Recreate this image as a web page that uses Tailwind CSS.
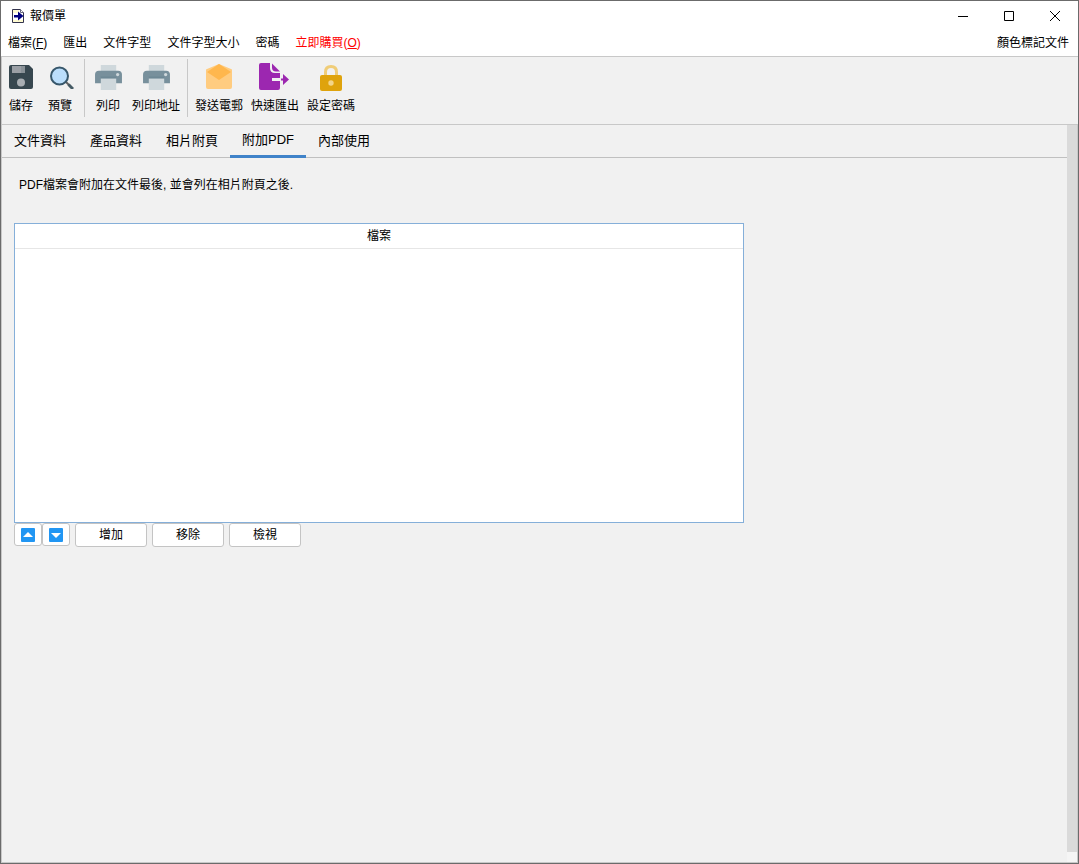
<!DOCTYPE html>
<html lang="zh-Hant">
<head>
<meta charset="utf-8">
<meta name="viewport" content="width=device-width, initial-scale=1">
<title>報價單</title>
<script src="https://cdn.jsdelivr.net/npm/@tailwindcss/browser@4"></script>
</head>
<body class="flex min-h-screen flex-col border border-[#6b6b6b] bg-[#f1f1f1] font-['Liberation_Sans','Noto_Sans_CJK_TC',sans-serif] text-xs text-black">
  <svg class="hidden" aria-hidden="true">
    <symbol id="printer" viewBox="0 0 28 26">
      <path fill="#cfd8dc" d="M6 0h16v7H6z"/>
      <path fill="#78909c" d="M4 6h20q4 0 4 4v9H0v-9q0-4 4-4z"/>
      <path fill="#cfd8dc" d="M6 14h16v12H6z"/>
      <path fill="#607d8b" d="M6 12h16v2H6z" opacity=".4"/>
      <circle cx="23.500" cy="10" r="1.700" fill="#cfd8dc"/>
    </symbol>
  </svg>

  <header class="border-b border-[#c8c8c8] bg-white">
    <div class="flex h-[29px] items-center pl-[9px]">
      <svg class="h-4 w-4" viewBox="0 0 16 16" aria-hidden="true">
        <path fill="#fff" stroke="#33334d" d="M2.500 1.500h8l3 3v10h-11z"/>
        <path fill="#fffbd0" d="M3 2h6v3H3zM3 12h10v2H3z"/>
        <path fill="#fff" stroke="#666680" d="M10.500 1.500v3h3"/>
        <path fill="#000080" d="M4 7h4V3.500l5.500 4.500L8 12.500V9.500H4z"/>
      </svg>
      <h1 class="ml-1 grow">報價單</h1>
      <div class="flex h-full">
        <button aria-label="最小化" class="flex w-[46px] items-center justify-center"><svg class="h-3 w-3" viewBox="0 0 12 12"><path stroke="#000" d="M1 6.500h10"/></svg></button>
        <button aria-label="最大化" class="flex w-[46px] items-center justify-center"><svg class="h-3 w-3" viewBox="0 0 12 12"><path fill="none" stroke="#000" d="M1.500 1.500h9v9h-9z"/></svg></button>
        <button aria-label="關閉" class="flex w-[46px] items-center justify-center"><svg class="h-3 w-3" viewBox="0 0 12 12"><path stroke="#000" d="M1 1l10 10M11 1L1 11"/></svg></button>
      </div>
    </div>
    <nav class="flex h-[26px] items-center gap-4 pr-[9px] pl-[7px]">
      <button>檔案(<u>F</u>)</button>
      <button>匯出</button>
      <button>文件字型</button>
      <button>文件字型大小</button>
      <button>密碼</button>
      <button class="text-[#ff0000]">立即購買(<u>O</u>)</button>
      <button class="ml-auto">顏色標記文件</button>
    </nav>
  </header>

  <div role="toolbar" class="flex h-[68px] border-b border-l border-[#c8c8c8] pt-[2px] pb-[7px]">
    <button class="flex w-[38px] flex-col items-center pt-[6px]">
      <svg class="h-6 w-6" viewBox="0 0 24 24" aria-hidden="true">
        <path fill="#37474f" d="M2 0h18l4 4v18q0 2-2 2H2q-2 0-2-2V2q0-2 2-2z"/>
        <path fill="#9a9fa5" d="M3 1h13v7H3z"/><path fill="#78848a" d="M12 1h4v7h-4z" opacity=".5"/>
        <circle cx="12" cy="17.500" r="4" fill="#a9aeb3"/>
      </svg>
      <span class="mt-[7px] leading-5">儲存</span>
    </button>
    <button class="mr-1 flex w-10 flex-col items-center pt-[6px]">
      <svg class="ml-[4px] h-6 w-6" viewBox="0 0 24 24" aria-hidden="true">
        <path stroke="#616161" stroke-width="2" d="M16 17l3 3"/>
        <path stroke="#455a64" stroke-width="3" d="M18.500 19.500l4.500 4.500"/>
        <circle cx="9.500" cy="11" r="8.500" fill="#bbdefb" stroke="#37576b" stroke-width="2"/>
      </svg>
      <span class="mt-[7px] leading-5">預覽</span>
    </button>
    <div class="border-l border-[#c8c8c8]"></div>
    <button class="ml-[3px] flex w-10 flex-col items-center pt-[6px]">
      <svg class="h-[25px] w-[27px]" aria-hidden="true"><use href="#printer"/></svg>
      <span class="mt-[6px] leading-5">列印</span>
    </button>
    <button class="flex w-14 flex-col items-center pt-[6px]">
      <svg class="h-[25px] w-[27px]" aria-hidden="true"><use href="#printer"/></svg>
      <span class="mt-[6px] leading-5">列印地址</span>
    </button>
    <div class="ml-[3px] border-l border-[#c8c8c8]"></div>
    <button class="ml-[3px] flex w-14 flex-col items-center pt-[5px]">
      <svg class="h-[26px] w-7" viewBox="0 0 28 26" aria-hidden="true">
        <path fill="#ffcc80" d="M1 6q0-1 1-1L14 0l12 5q1 0 1 1v17q0 2-2 2H3q-2 0-2-2z"/>
        <path fill="#ffb74d" d="M2 8L14 0l12 8-12 8z"/>
      </svg>
      <span class="mt-[6px] leading-5">發送電郵</span>
    </button>
    <button class="flex w-14 flex-col items-center pt-[4px]">
      <svg class="mr-[2px] h-7 w-[30px]" viewBox="0 0 30 28" aria-hidden="true">
        <path fill="#9c27b0" d="M2 0h9v5q0 5 5 5h5v5h-8v3h8v7q0 2-2 2H2q-2 0-2-2V2q0-2 2-2z"/>
        <path fill="#9c27b0" d="M13 0.500l8 8h-4q-4 0-4-4z"/>
        <path fill="#9c27b0" d="M22 15.500h2V11l6 5.500-6 5.500v-4.500h-2z"/>
      </svg>
      <span class="mt-[5px] leading-5">快速匯出</span>
    </button>
    <button class="flex w-14 flex-col items-center pt-[6px]">
      <svg class="h-[26px] w-[22px]" viewBox="0 0 22 26" aria-hidden="true">
        <path fill="none" stroke="#f0cd78" stroke-width="3" d="M5.500 12V7q0-5.500 5.500-5.500T16.500 7v5"/>
        <rect y="10" width="22" height="16" rx="2" fill="#dfa30c"/>
        <circle cx="11" cy="18" r="2.700" fill="#f3d58a"/>
      </svg>
      <span class="mt-[5px] leading-5">設定密碼</span>
    </button>
  </div>

  <div class="flex grow border-r border-b border-l border-[#c8c8c8]">
    <main class="grow">
      <div role="tablist" class="flex h-[33px] border-b border-[#c0c0c0] text-[13px]">
        <button role="tab" aria-selected="false" class="w-[76px] shrink-0">文件資料</button>
        <button role="tab" aria-selected="false" class="w-[76px] shrink-0">產品資料</button>
        <button role="tab" aria-selected="false" class="w-[76px] shrink-0">相片附頁</button>
        <button role="tab" aria-selected="true" class="-mb-px w-[76px] shrink-0 border-b-3 border-[#4083c9]">附加PDF</button>
        <button role="tab" aria-selected="false" class="w-[76px] shrink-0">內部使用</button>
      </div>
      <p class="mt-[17px] ml-[17px] leading-5">PDF檔案會附加在文件最後, 並會列在相片附頁之後.</p>
      <div class="mt-7 ml-3 h-[300px] max-w-[730px] border border-[#85afd9] bg-white">
        <table class="w-full">
          <thead><tr class="border-b border-[#e6e6e6]"><th class="h-6 p-0 text-center font-normal">檔案</th></tr></thead>
          <tbody></tbody>
        </table>
      </div>
      <div class="ml-3 flex items-start">
        <button aria-label="上移" class="flex h-[23px] w-7 items-center justify-center rounded-[3px] border border-[#c4c4c4] bg-white"><svg class="h-[14px] w-[14px]" viewBox="0 0 14 14"><rect width="14" height="14" rx="1" fill="#2196f3"/><path fill="#fff" d="M7 4l5 5H2z"/></svg></button>
        <button aria-label="下移" class="mr-[5px] flex h-[23px] w-7 items-center justify-center rounded-[3px] border border-[#c4c4c4] bg-white"><svg class="h-[14px] w-[14px]" viewBox="0 0 14 14"><rect width="14" height="14" rx="1" fill="#2196f3"/><path fill="#fff" d="M7 10l5-5H2z"/></svg></button>
        <div class="flex gap-[5px]">
          <button class="h-6 w-[72px] rounded-[3px] border border-[#c4c4c4] bg-white">增加</button>
          <button class="h-6 w-[72px] rounded-[3px] border border-[#c4c4c4] bg-white">移除</button>
          <button class="h-6 w-[72px] rounded-[3px] border border-[#c4c4c4] bg-white">檢視</button>
        </div>
      </div>
    </main>
    <div class="flex w-2.5 flex-col" aria-hidden="true">
      <div class="grow bg-[#dadada]"></div>
      <div class="h-2.5 bg-[#f5f5f5]"></div>
    </div>
  </div>
</body>
</html>
